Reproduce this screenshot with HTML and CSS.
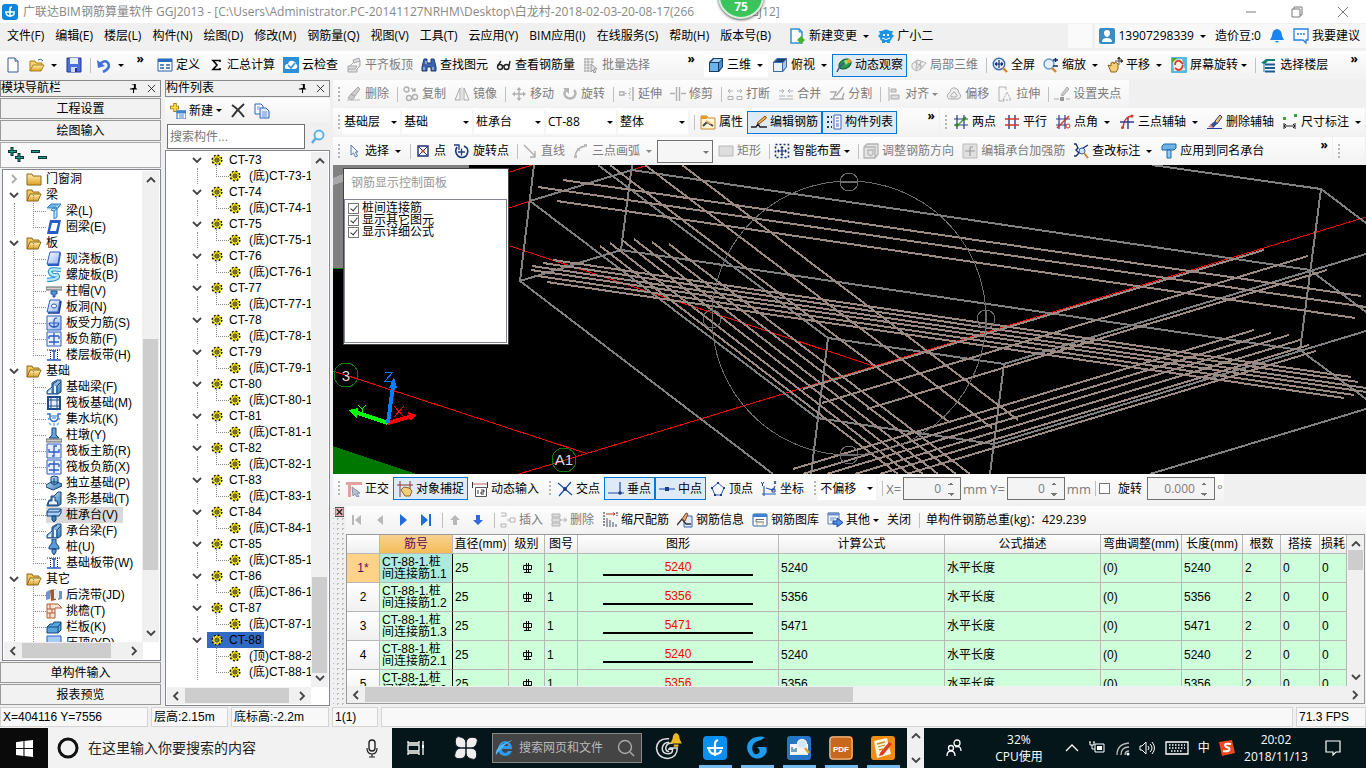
FILE: index.html
```html
<!doctype html>
<html lang="zh-CN">
<head>
  <meta charset="UTF-8">
  <meta name="viewport" content="width=device-width, initial-scale=1.0">
  <title>广联达BIM钢筋算量软件 GGJ2013</title>
  <link rel="stylesheet" href="styles.css">
</head>
<body>

<!-- icon sprite -->
<svg class="sprite" aria-hidden="true">
  <defs>
    <linearGradient id="g-fold" x1="0" y1="0" x2="0" y2="1"><stop offset="0" stop-color="#fff0b0"/><stop offset="1" stop-color="#e0a020"/></linearGradient>
    <linearGradient id="g-blue" x1="0" y1="0" x2="1" y2="1"><stop offset="0" stop-color="#fff"/><stop offset="1" stop-color="#8fb4ee"/></linearGradient>
    <linearGradient id="g-steel" x1="0" y1="0" x2="1" y2="1"><stop offset="0" stop-color="#d8ecfa"/><stop offset="1" stop-color="#2f78b8"/></linearGradient>
  </defs>
  <symbol id="logo" viewBox="0 0 16 16"><rect width="16" height="16" rx="3" fill="#0a86dc"/><path d="M8 13V5q0-2 2-2M3 8h10M4 8q0 4 4 4t4-3" fill="none" stroke="#fff" stroke-width="1.6"/></symbol>
  <symbol id="new" viewBox="0 0 16 16"><path d="M3 1h7l3 3v11H3z" fill="#fff" stroke="#3a5a8a"/><path d="M10 1v3h3" fill="#cfe0f5" stroke="#3a5a8a"/></symbol>
  <symbol id="open" viewBox="0 0 16 16"><path d="M1 14V4h5l1 2h6v2" fill="#f6d36b" stroke="#a9801e"/><path d="M1 14l3-6h11l-3 6z" fill="url(#g-fold)" stroke="#a9801e"/><path d="M9 3q3-2 5 1" fill="none" stroke="#2a62c0"/></symbol>
  <symbol id="save" viewBox="0 0 16 16"><path d="M1 1h14v14H1z" fill="#4f6fd8" stroke="#22349a"/><path d="M4 1h8v6H4z" fill="#e8eefc"/><path d="M5 10h6v5H5z" fill="#d0d8ec"/><path d="M9 11h2v4H9z" fill="#22349a"/></symbol>
  <symbol id="undo" viewBox="0 0 16 16"><path d="M7 15q8-4 5-9-3-4-8 1" fill="none" stroke="#3f72d8" stroke-width="2.6"/><path d="M1 3l1 8 7-2z" fill="#3f72d8"/></symbol>
  <symbol id="define" viewBox="0 0 16 16"><path d="M1 2h14v12H1z" fill="#fff" stroke="#2a5ea8"/><path d="M1 2h14v3H1z" fill="#2a6ac0"/><path d="M3 8h4M3 11h4M9 8h4M9 11h4" stroke="#2a5ea8" stroke-width="1.6"/></symbol>
  <symbol id="sum" viewBox="0 0 16 16"><path d="M12 5V3.500H5L9 8l-4 4.500h7V11" fill="none" stroke="#000" stroke-width="1.600"/></symbol>
  <symbol id="cloud" viewBox="0 0 16 16"><rect width="16" height="16" fill="#2a8fd6"/><path d="M4 12q-3 0-2-3 0-2 3-2 1-4 5-3 3 1 3 3 2 1 1 4l-2 1z" fill="#fff"/><path d="M5 8l3 3 4-5" fill="none" stroke="#2a8fd6" stroke-width="1.6"/></symbol>
  <symbol id="align-top" viewBox="0 0 16 16"><path d="M2 9h9l-2 3H2zM2 12v3h9v-3M4 9l4-4M11 12l3-3V4M7 3l6-2 1 3-6 2z" fill="#ddd" stroke="#a8a8a8"/></symbol>
  <symbol id="find" viewBox="0 0 16 16"><path d="M3 2h3v4h4V2h3l2 8v4h-5v-4H6v4H1v-4z" fill="#3c66ac" stroke="#1c3a78"/><path d="M3 10v3M12 10v3M5 4v3" stroke="#cfe0ff"/></symbol>
  <symbol id="glasses" viewBox="0 0 16 16"><g fill="none" stroke="#222" stroke-width="1.4"><circle cx="4" cy="10" r="2.5"/><circle cx="10.500" cy="10" r="2.500"/><path d="M1.500 9L5 4M13 9l1-5M6.500 9h1.500"/></g></symbol>
  <symbol id="batch" viewBox="0 0 16 16"><path d="M1 2h10M1 5h10M1 8h6M1 11h6M1 14h6M2 1v14M5 1v14M9 1v6" stroke="#aaa"/><path d="M8 7l6 5-3 0 2 3-2 1-1-3-2 2z" fill="#ddd" stroke="#999"/></symbol>
  <symbol id="cube" viewBox="0 0 16 16"><path d="M1 5l4-4h10v9l-4 5H1z" fill="#1d3b60"/><path d="M2 6h8v8H2z" fill="#6fb4e8"/><path d="M3 5l3-3h8l-3 3z" fill="#a9d6f8"/><path d="M11 6l3-3v7l-3 3z" fill="#4a90cc"/></symbol>
  <symbol id="topview" viewBox="0 0 16 16"><path d="M1 5l4-4h10v9l-4 5H1z" fill="#3a6ea8"/><path d="M2 6h8v8H2z" fill="#e6f0fa"/><path d="M3 5l3-3h8l-3 3z" fill="#14406f"/><path d="M11 6l3-3v7l-3 3z" fill="#a8c8e8"/></symbol>
  <symbol id="orbit" viewBox="0 0 16 16"><ellipse cx="9" cy="7" rx="6.500" ry="4.500" fill="#2c9c50" stroke="#0d5a2a" transform="rotate(-30 9 7)"/><path d="M8 4q4-3 5 1l-3 3z" fill="#9ce07a"/><path d="M1 15q3-7 7-9" fill="none" stroke="#3a5a8a" stroke-width="1.500"/><circle cx="13" cy="4" r="2" fill="#f0a030"/></symbol>
  <symbol id="local3d" viewBox="0 0 16 16"><path d="M1 7l5-4 4 1 5 2-5 6-5 2-4-3zM6 3l-1 9M10 4l-1 9M3 5l9 5M5 13l5-8" fill="#eee" stroke="#b4b4b4"/></symbol>
  <symbol id="full" viewBox="0 0 16 16"><circle cx="7" cy="7" r="5.800" fill="#e4f0fc" stroke="#3c6cb4" stroke-width="1.400"/><path d="M3 7h8M7 3v8M3 7l2-1.500M3 7l2 1.500M11 7L9 5.500M11 7L9 8.500" stroke="#14306c" stroke-width="1.200"/><path d="M11 11l4 4" stroke="#d0862a" stroke-width="2.400"/></symbol>
  <symbol id="zoom" viewBox="0 0 16 16"><circle cx="6" cy="7" r="5" fill="#e4f0fc" stroke="#6a94c8" stroke-width="1.400"/><path d="M9 11l4 4" stroke="#d0862a" stroke-width="2.400"/><path d="M10 3h5M12.500 1v4M10 9h5" stroke="#14306c" stroke-width="1.600"/></symbol>
  <symbol id="pan" viewBox="0 0 16 16"><path d="M1 8l3 1V6l2-1 1 2 1-2 2 1 1 1v5l-2 3H4z" fill="#f3cf7a" stroke="#8a6420"/><path d="M12 0v8M8 4h8M12 0l-1.500 2h3zM16 4l-2-1.500v3z" stroke="#333" fill="#333" stroke-width=".8"/></symbol>
  <symbol id="rotate-screen" viewBox="0 0 16 16"><rect width="16" height="16" rx="1" fill="#5cb8dc"/><path d="M2 3l9-1 3 11-11 1z" fill="#f4f4e8"/><path d="M4 8q0-5 5-4l3 3M12 8q-1 5-5 5l-3-2" fill="none" stroke="#e03a2a" stroke-width="1.800"/><path d="M1 1h5L1 6z" fill="#4aa82c"/></symbol>
  <symbol id="floors" viewBox="0 0 16 16"><path d="M0 6l5-4h9v2H7L4 7z" fill="#128072"/><path d="M4 7.500h10M4 11h10M4 14.500h10" stroke="#1a5a9a" stroke-width="2"/><path d="M3 6v9" stroke="#128072"/></symbol>
  <symbol id="erase-g" viewBox="0 0 16 16"><path d="M1 14h13" stroke="#bbb"/><path d="M5 8l7-7 2 2-5 7zM2 12l3-4 4 3-3 3z" fill="#ccc" stroke="#aaa"/></symbol>
  <symbol id="copy-g" viewBox="0 0 16 16"><g fill="none" stroke="#b0b0b0" stroke-width="1.400"><circle cx="3.500" cy="3.500" r="2.500"/><circle cx="6" cy="12" r="2.500"/><circle cx="12" cy="11" r="2.500"/><path d="M8 2l4 3M12 2v3H9"/></g></symbol>
  <symbol id="mirror-g" viewBox="0 0 16 16"><path d="M6 2v12H1zM10 2v12h5z" fill="none" stroke="#aaa"/><path d="M8 1v14" stroke="#ccc"/></symbol>
  <symbol id="move-g" viewBox="0 0 16 16"><path d="M8 3v10M3 8h10" stroke="#b0b0b0" stroke-width="1.400"/><path d="M8 1l2.500 3h-5zM8 15l2.500-3h-5zM1 8l3-2.500v5zM15 8l-3-2.500v5z" fill="#b0b0b0"/></symbol>
  <symbol id="rotate-g" viewBox="0 0 16 16"><path d="M4 4q-3 4 0 7 4 3 8 0 3-4 0-7" fill="none" stroke="#b4b4b4" stroke-width="2.400"/><path d="M1 2h6v6z" fill="#b4b4b4"/></symbol>
  <symbol id="extend-g" viewBox="0 0 16 16"><path d="M0 6h5v3H0zM14 1v14" stroke="#aaa" fill="none" stroke-width="1.400"/><path d="M6 7.500h5M11 2v12" stroke="#bbb" stroke-dasharray="2 1"/></symbol>
  <symbol id="trim-g" viewBox="0 0 16 16"><path d="M0 7.500h5M11 7.500h5M6.500 1v14M9.500 1v14" stroke="#b0b0b0" stroke-width="1.400"/></symbol>
  <symbol id="break-g" viewBox="0 0 16 16"><path d="M1 10.500h5v3H1zM10 10.500h5v3h-5z" stroke="#b0b0b0" fill="none"/><path d="M3 3L1 5l2 2M13 3l2 2-2 2M1 5h5M10 5h5" fill="none" stroke="#b0b0b0"/></symbol>
  <symbol id="join-g" viewBox="0 0 16 16"><path d="M1 13h14M1 10h6M9 10h6" stroke="#b0b0b0" fill="none"/><path d="M4 3l2 2-2 2M12 3l-2 2 2 2M1 5h5M10 5h5" fill="none" stroke="#b0b0b0"/></symbol>
  <symbol id="split-g" viewBox="0 0 16 16"><path d="M1 6h6l-3 7h9l2-6M1 13h14M14 1L7 10" fill="none" stroke="#aaa" stroke-width="1.400"/></symbol>
  <symbol id="align-g" viewBox="0 0 16 16"><path d="M3 1v14" stroke="#aaa"/><path d="M5 3h5v3H5zM5 9h8v4H5z" fill="#ddd" stroke="#aaa"/></symbol>
  <symbol id="offset-g" viewBox="0 0 16 16"><path d="M3 13q-4-3 1-7 1-5 5-4 4 1 4 5 4 4-1 6zM5 11q-1-2 1-3 2-4 4 0 2 2 0 3z" fill="#eee" stroke="#aaa"/></symbol>
  <symbol id="stretch-g" viewBox="0 0 16 16"><path d="M9 4V1H2v14h5" fill="none" stroke="#b0b0b0"/><path d="M6 14l4-8 4 8z" fill="none" stroke="#aaa" stroke-dasharray="2 1"/></symbol>
  <symbol id="grip-g" viewBox="0 0 16 16"><path d="M0 13h5M12 13h4" stroke="#aaa"/><path d="M6 11h4v4H6z" fill="#999"/><path d="M7 9l6-8 2 2-6 7z" fill="#ccc" stroke="#aaa"/></symbol>
  <symbol id="prop" viewBox="0 0 16 16"><path d="M1 2h6l1 2h7v11H1z" fill="#fff6da" stroke="#c88a2a"/><path d="M1 2h6v3H1z" fill="#e89a2a"/><path d="M3 12l4-4 3 2 3 2" fill="none" stroke="#444" stroke-width="2"/><path d="M6 7l5 3" stroke="#e8b060" stroke-width="1.500"/></symbol>
  <symbol id="edit-bar" viewBox="0 0 16 16"><path d="M0 13h5l2-3 2 3h7" fill="none" stroke="#222" stroke-width="1.400"/><path d="M6 9l8-7 1.500 2L8 10z" fill="#f0b848" stroke="#8a4a1a"/></symbol>
  <symbol id="list" viewBox="0 0 16 16"><path d="M8 1h7v14H8z" fill="#fff" stroke="#3a62b4"/><path d="M10 4h3M10 7h3M10 10h3M10 12h3" stroke="#3a62b4"/><path d="M1 3h2M1 8h2M1 13h2M5 3h1M5 8h1M5 13h1" stroke="#234" stroke-width="2"/></symbol>
  <symbol id="ax-two" viewBox="0 0 16 16"><path d="M4 1v14M11 1v14M1 5h14M1 11h14" stroke="#2c3c8c" stroke-width="1.200"/><path d="M3 13L13 3" stroke="#3f9a2c" stroke-width="1.200"/><circle cx="4" cy="11" r="1.700" fill="#2f8a22"/><circle cx="11" cy="5" r="1.700" fill="#2f8a22"/></symbol>
  <symbol id="ax-par" viewBox="0 0 16 16"><path d="M5 1v14M11 1v14" stroke="#2c3c8c" stroke-width="1.400"/><path d="M1 5h14M1 11h14" stroke="#d03a2a" stroke-width="1.400"/></symbol>
  <symbol id="ax-ang" viewBox="0 0 16 16"><path d="M4 1v14M10 1v14M1 5h14M1 11h10" stroke="#2c3c8c" stroke-width="1.200"/><path d="M2 14L14 2" stroke="#d03a2a" stroke-width="1.400"/><circle cx="13" cy="12" r="2" fill="none" stroke="#d03a2a"/></symbol>
  <symbol id="ax-arc" viewBox="0 0 16 16"><path d="M14 2Q5 2 4 14" fill="none" stroke="#d03a2a" stroke-width="1.400"/><path d="M1 8h14M9 4v11" stroke="#2c3c8c" stroke-width="1.400"/><circle cx="13" cy="2" r="1.500" fill="#d03a2a"/><circle cx="3.500" cy="13.500" r="1.500" fill="#d03a2a"/></symbol>
  <symbol id="ax-del" viewBox="0 0 16 16"><path d="M0 14.500h15" stroke="#2c3c8c"/><path d="M8 7l5-6 2 2-5 7z" fill="#f0c468" stroke="#2c3c8c"/><path d="M3 11l5-4 2 3-4 4z" fill="#2c4c9c"/><path d="M1 13l3-3 2 4z" fill="#d88"/></symbol>
  <symbol id="dim" viewBox="0 0 16 16"><path d="M1 3h3v3H1zM12 0h3v3h-3z" fill="#34a83c"/><path d="M2 9v6M13 9v6M2 12h11M2 12l2-2M2 12l2 2M13 12l-2-2M13 12l-2 2" stroke="#222" fill="none"/></symbol>
  <symbol id="pointer" viewBox="0 0 16 16"><path d="M5 2v10l2.500-2 2 4 2-1-2-4h2.500z" fill="#eef4fc" stroke="#5a7aac"/></symbol>
  <symbol id="point" viewBox="0 0 16 16"><path d="M3 3h10v10H3z" fill="#fff" stroke="#1c2c7c" stroke-width="1.400"/><path d="M4 4l8 8M12 4l-8 8" stroke="#1c2c7c"/><circle cx="8" cy="8" r="1.600" fill="#d03a2a"/></symbol>
  <symbol id="rot-point" viewBox="0 0 16 16"><path d="M3 4q-3 5 1 9 4 3 8 0 3-4 1-8l-3-2" fill="none" stroke="#1c3c7c" stroke-width="1.600"/><path d="M0 2h5v5M4 9h7M7.500 5.500v7" stroke="#1c3c7c" stroke-width="1.300" fill="none"/></symbol>
  <symbol id="line-g" viewBox="0 0 16 16"><path d="M2 2l11 11M13 8v6H8" fill="none" stroke="#aaa" stroke-width="1.300"/></symbol>
  <symbol id="arc-g" viewBox="0 0 16 16"><path d="M2 14Q3 4 13 3" fill="none" stroke="#aaa" stroke-width="1.400"/><path d="M1 12h3v3H1zM4 5h3v3H4zM11 1h3v3h-3z" fill="#bbb"/></symbol>
  <symbol id="rect-g" viewBox="0 0 16 16"><path d="M1 3h14v10H1z" fill="#ddd" stroke="#b8b8b8"/></symbol>
  <symbol id="smart" viewBox="0 0 16 16"><path d="M1.500 1.500h13v13h-13z" fill="none" stroke="#14306c" stroke-width="1.600" stroke-dasharray="2 2"/><path d="M8 4v8M4 8h8" stroke="#14306c" stroke-width="1.200"/><path d="M8 3l2 2H6zM8 13l2-2H6zM3 8l2-2v4zM13 8l-2-2v4z" fill="#14306c"/></symbol>
  <symbol id="adj-g" viewBox="0 0 16 16"><path d="M1 4l3-3h11v10l-3 4H1zM1 4h11v11M5 7h5v4q-2 3-5 0z" fill="#e4e4e4" stroke="#b4b4b4" stroke-width="1.300"/></symbol>
  <symbol id="str-g" viewBox="0 0 16 16"><path d="M1 1h14v14H1z" fill="#e0e0e0" stroke="#bbb"/><path d="M3 8h10M8 13V6q0-3 3-2" fill="none" stroke="#999" stroke-width="1.200"/></symbol>
  <symbol id="check-dim" viewBox="0 0 16 16"><path d="M1 1h2l2 4-2 2 3 3-3 3H1M7 7l8-5" fill="none" stroke="#14306c" stroke-width="1.400"/><circle cx="9" cy="8" r="3" fill="#cfe4fa" stroke="#2a62b0"/><path d="M11 10l4 5" stroke="#d0862a" stroke-width="2"/></symbol>
  <symbol id="cap" viewBox="0 0 16 16"><path d="M1 3l2-2h12v4l-2 2H1z" fill="#6cb4e8" stroke="#1f68a8"/><path d="M6 7h4v8H6z" fill="#8ccaf4" stroke="#1f68a8"/></symbol>
  <symbol id="ortho" viewBox="0 0 16 16"><path d="M0 1h16v3H5v12H2V4H0z" fill="#e0a4a0"/><path d="M6 6l8 6-3 .5 2 3-2 .5-2-3-2 2z" fill="#b6c6d6" stroke="#8494a8"/></symbol>
  <symbol id="snap" viewBox="0 0 16 16"><path d="M3 0v16M13 0v8M0 4h16" stroke="#903030"/><path d="M4 9l3-3 5 1 3 3-2 5H8z" fill="#f3cf7a" stroke="#8a6420"/></symbol>
  <symbol id="dyn" viewBox="0 0 16 16"><path d="M.5 1v6M15.500 1v6" stroke="#333"/><path d="M1 3h14" stroke="#c06060"/><path d="M3.500 6.500h11v9h-11z" fill="#fff" stroke="#555"/><path d="M6 9v4M9 9h3v2H9v2h3" fill="none" stroke="#333"/></symbol>
  <symbol id="cross" viewBox="0 0 16 16"><path d="M1 2l14 12M2 15L14 1" stroke="#1c4ca8" stroke-width="1.200"/><circle cx="8" cy="8" r="2" fill="#1c3c8c"/></symbol>
  <symbol id="perp" viewBox="0 0 16 16"><path d="M0 12h16M12 1v11" stroke="#1c4ca8" stroke-width="1.200"/><circle cx="12" cy="12" r="1.800" fill="#1c3c8c"/></symbol>
  <symbol id="mid" viewBox="0 0 16 16"><path d="M0 8h16" stroke="#3c6cc8" stroke-width="1.300"/><path d="M6 6h4v4H6z" fill="#1c3c8c"/></symbol>
  <symbol id="vertex" viewBox="0 0 16 16"><path d="M8 2l6 5-3 7H5L2 7z" fill="none" stroke="#2a5cb4"/><path d="M7 1h2v2H7zM1 6h2v2H1zM13 6h2v2h-2zM4 13h2v2H4zM10 13h2v2h-2z" fill="#1c3c8c"/></symbol>
  <symbol id="coord" viewBox="0 0 16 16"><path d="M3 5v10M1 13h14M5 7l7 2 2-4" fill="none" stroke="#2a5cb4" stroke-width="1.200"/><path d="M0 1l1.500 2L3 1M1.500 3v2M11 8h3v3h-3zM13 0l2 3M15 0l-2 3" stroke="#1c3c8c" fill="none"/></symbol>
  <symbol id="first-g" viewBox="0 0 16 16"><path d="M3 3h2v10H3zM12 3v10L6 8z" fill="#b8b8b8"/></symbol>
  <symbol id="prev-g" viewBox="0 0 16 16"><path d="M11 3v10L5 8z" fill="#b8b8b8"/></symbol>
  <symbol id="next" viewBox="0 0 16 16"><path d="M5 2v12l7-6z" fill="#1f6ae0"/></symbol>
  <symbol id="last" viewBox="0 0 16 16"><path d="M3 2v12l7-6zM11 2h2v12h-2z" fill="#1f6ae0"/></symbol>
  <symbol id="up-g" viewBox="0 0 16 16"><path d="M8 3l5 5h-3v5H6V8H3z" fill="#b8b8b8"/></symbol>
  <symbol id="down" viewBox="0 0 16 16"><path d="M8 13l5-5h-3V3H6v5H3z" fill="#2f6ae0"/></symbol>
  <symbol id="ins-g" viewBox="0 0 16 16"><path d="M1 1h5v3H1M1 12h5v3H1zM7 8h3M10 6h5v4h-5z" fill="none" stroke="#b4b4b4"/></symbol>
  <symbol id="delrow-g" viewBox="0 0 16 16"><path d="M1 2h8v3H1zM1 11h8v3H1zM1 6h8v4H1z" fill="#ddd" stroke="#b4b4b4"/><path d="M9 8h7M13 6l3 2-3 2" fill="none" stroke="#b4b4b4"/></symbol>
  <symbol id="scale-bar" viewBox="0 0 16 16"><path d="M4 2h9M11 .5l2 1.500-2 1.500" stroke="#c03a2a" fill="none"/><path d="M2 0v15M15 0v4" stroke="#222" stroke-dasharray="2 1"/><path d="M5 6v9M8 8v7M11 10v5M14 12v3" stroke="#456"/></symbol>
  <symbol id="bar-info" viewBox="0 0 16 16"><path d="M7 4h8v11H7z" fill="#dfeafa" stroke="#3a62b4"/><path d="M0 13l5-6 4 5h5" fill="none" stroke="#333" stroke-width="1.400"/><path d="M5 7l4-6 2 1-3 7z" fill="#e8a878" stroke="#8a4a1a"/></symbol>
  <symbol id="bar-lib" viewBox="0 0 16 16"><rect x="1" y="2" width="14" height="12" rx="1" fill="#fff" stroke="#2a5ea8"/><path d="M1 2h14v3H1z" fill="#3f80d0"/><path d="M4 10V7.500h8M4 10h8" fill="none" stroke="#666"/><path d="M4 12h2M10 12h2" stroke="#e0a020"/></symbol>
  <symbol id="other" viewBox="0 0 16 16"><path d="M1 1h11v11H1z" fill="#eef4fc" stroke="#5a7cb4"/><path d="M1 1h11v2H1zM3 6h6M3 8h4" fill="#7090c8" stroke="#7090c8"/><path d="M6 9h4V6l6 4.500L10 15v-3H6z" fill="#4f8cec" stroke="#17489c"/></symbol>
  <symbol id="change" viewBox="0 0 16 16"><path d="M1 1h8l3 3v11H1z" fill="#fff" stroke="#2f90d0" stroke-width="1.500"/><path d="M9 1v3h3" fill="none" stroke="#2f90d0"/><path d="M11 8l4 4-4 4-4-4z" fill="#48b42c"/></symbol>
  <symbol id="mascot" viewBox="0 0 16 16"><path d="M1 3l3 0q4-3 8 0l3 0-1 3 2 2-2 2q-1 3-2 3v2h-3v-1H7v1H4v-2q-2-1-2-3L0 8l2-2z" fill="#1b94e4"/><path d="M5 6h2v2H5zM9 6h2v2H9z" fill="#fff"/><path d="M4 10q4 3 8 0" stroke="#fff" fill="none"/></symbol>
  <symbol id="user" viewBox="0 0 16 16"><rect width="16" height="16" rx="2" fill="#3a8cc4"/><path d="M8 2q3 0 3 3t-3 4q-3-1-3-4t3-3M3 14q0-4 5-4t5 4z" fill="#fff"/></symbol>
  <symbol id="bell" viewBox="0 0 16 16"><path d="M8 1q5 1 5 7l2 4H1l2-4q0-6 5-7M6 13h4l-2 2z" fill="#1a84ee"/></symbol>
  <symbol id="chat" viewBox="0 0 16 16"><path d="M1 1h14v11h-2v3l-3-3H1z" fill="#fff" stroke="#2a80dc" stroke-width="1.300"/><path d="M4 6h2M7 6h2M10 6h2" stroke="#2a80dc" stroke-width="1.500"/></symbol>
  <symbol id="newcomp" viewBox="0 0 16 16"><path d="M5 0v9M0 4.500h9" stroke="#a87a10" stroke-width="3.400"/><path d="M5 1v7M1 4.500h7" stroke="#ffe04a" stroke-width="1.800"/><path d="M7 8h9v8H7z" fill="#fff" stroke="#2a5ea8"/><path d="M7 8h9v2H7zM9 12h5M9 14h5" fill="#3f80d0" stroke="#3f80d0"/></symbol>
  <symbol id="del-x" viewBox="0 0 16 16"><path d="M2 2q6 4 12 12M14 1Q7 7 2 14" fill="none" stroke="#333" stroke-width="2"/></symbol>
  <symbol id="copy" viewBox="0 0 16 16"><path d="M1 1h6l2 2v8H1z" fill="#fff" stroke="#2a5ec0"/><path d="M6 5h6l3 3v7H6z" fill="#dfeafc" stroke="#2a5ec0"/><path d="M8 9h5M8 11h5M8 13h5M3 4h3M3 6h2" stroke="#6a94dc"/></symbol>
  <symbol id="lens" viewBox="0 0 16 16"><circle cx="9" cy="6" r="4.500" fill="#eaf6ff" stroke="#5aaee4" stroke-width="1.800"/><path d="M6 9l-4 5" stroke="#5aaee4" stroke-width="2.600"/></symbol>
  <symbol id="pin" viewBox="0 0 10 10"><path d="M3 0h4v5H3M6 0v5M1 5.500h8M5 5v5" fill="none" stroke="#000" stroke-width="1.200"/></symbol>
  <symbol id="x" viewBox="0 0 10 10"><path d="M1 1l8 8M9 1L1 9" stroke="#222"/></symbol>
  <symbol id="expand" viewBox="0 0 16 16"><path d="M4 0v9M0 4.500h9M11 6v9M7 10.500h9" stroke="#063838" stroke-width="3"/><path d="M4 1v7M1 4.500h7M11 7v7M8 10.500h7" stroke="#2a9a88"/></symbol>
  <symbol id="collapse" viewBox="0 0 16 16"><path d="M0 4.500h9M7 10.500h9" stroke="#063838" stroke-width="3"/><path d="M1 4.500h7M8 10.500h7" stroke="#2a9a88"/></symbol>
  <symbol id="chev" viewBox="0 0 10 10"><path d="M1 3l4 4 4-4" fill="none" stroke="#444" stroke-width="1.800"/></symbol>
  <symbol id="chev-r" viewBox="0 0 10 10"><path d="M3 1l4 4-4 4" fill="none" stroke="#aaa" stroke-width="1.800"/></symbol>
  <symbol id="folder" viewBox="0 0 16 16"><path d="M1 3h5l1 2h8v9H1z" fill="url(#g-fold)" stroke="#8a681e"/></symbol>
  <symbol id="folder-open" viewBox="0 0 16 16"><path d="M1 14V3h5l1 2h6v2" fill="#f3c65a" stroke="#8a681e"/><path d="M1 14l3-7h11l-3 7z" fill="url(#g-fold)" stroke="#8a681e"/></symbol>
  <symbol id="gear" viewBox="0 0 12 12"><circle cx="6" cy="6" r="4.800" fill="#fff000" stroke="#000" stroke-width="1.400" stroke-dasharray="1.900 1.860"/><circle cx="6" cy="6" r="3.300" fill="#fff000"/><path d="M6 2.500v7M2.500 6h7M3.500 3.500l5 5M8.500 3.500l-5 5" stroke="#333" stroke-width=".8"/><circle cx="6" cy="6" r="1.200" fill="#fff" stroke="#000" stroke-width=".8"/></symbol>
  <!-- component icons -->
  <symbol id="c-beam" viewBox="0 0 16 16"><path d="M1 5l4-4h10l-3 4zM5 7l2-2h4v9l-3 2V8z" fill="#bfe2fa" stroke="#2a80c8"/><path d="M12 4l3-3M8 8l4-3M2 4l8 0M4 2l8 0" stroke="#2a80c8"/></symbol>
  <symbol id="c-ring" viewBox="0 0 16 16"><path d="M4 1h11l-3 14H1z" fill="#2a5ac4"/><path d="M6 4h6l-2 8H4z" fill="#fff"/></symbol>
  <symbol id="c-slab" viewBox="0 0 16 16"><path d="M4 1h10l-2 12H1z" fill="url(#g-blue)" stroke="#2a5ac4"/><path d="M14 1l1 1-2 13H2l-1-2h11z" fill="#2a5ac4"/></symbol>
  <symbol id="c-spiral" viewBox="0 0 16 16"><path d="M15 3Q3 1 4 5t7 3q4 4-10 5" fill="none" stroke="#2a90d0" stroke-width="4.400"/><path d="M15 3Q3 1 4 5t7 3q4 4-10 5" fill="none" stroke="#b8e8ff" stroke-width="2.400"/></symbol>
  <symbol id="c-cap" viewBox="0 0 16 16"><path d="M0 4h16v3H0z" fill="#d0d0d0" stroke="#666"/><path d="M5 8h6v3H9v3H7v-3H5z" fill="#5a9ae0" stroke="#1c4ca8"/></symbol>
  <symbol id="c-hole" viewBox="0 0 16 16"><path d="M4 1h10l-2 12H1z" fill="url(#g-blue)" stroke="#2a5ac4"/><ellipse cx="8" cy="7" rx="2.500" ry="2" fill="#fff" stroke="#2a5ac4"/><path d="M2 14h11l2-12" fill="none" stroke="#1c3c94" stroke-width="1.600"/></symbol>
  <symbol id="c-rebar" viewBox="0 0 16 16"><path d="M1 1h14v14H1z" fill="url(#g-blue)" stroke="#2a5ac4"/><path d="M8 13V6q0-3 3-3M3 8h10M3 8q1 4 5 4t5-4" fill="none" stroke="#2a5ac4" stroke-width="1.200"/></symbol>
  <symbol id="c-neg" viewBox="0 0 16 16"><path d="M1 1h14v14H1z" fill="#e8f0ff" stroke="#2a5ac4"/><path d="M3 5h10M3 11h10M8 2v12M3 5v3M13 5v3" fill="none" stroke="#2a5ac4" stroke-width="1.300"/></symbol>
  <symbol id="c-band" viewBox="0 0 16 16"><path d="M1 3h14M4.500 3v9M11.500 3v9" stroke="#222" stroke-dasharray="1 1"/><path d="M8 4v9M6 4h4M1 13h14" stroke="#2a5ac4" stroke-width="1.600"/></symbol>
  <symbol id="c-found" viewBox="0 0 16 16"><path d="M1 15v-3l5-4V4l5-3h4v12l-3 2z" fill="url(#g-steel)" stroke="#12447c"/><path d="M7 15V5l4-3M11 15V7l4-4" fill="none" stroke="#12447c"/><path d="M8 7h2v7H8zM2 13l3-3v4H2z" fill="#eaf6ff"/></symbol>
  <symbol id="c-raft" viewBox="0 0 16 16"><path d="M2 2h12v12H2z" fill="#e8f0ff" stroke="#1c4c8c" stroke-width="2"/><path d="M5 1v14M11 1v14M1 5h14M1 11h14" stroke="#1c4c8c"/></symbol>
  <symbol id="c-pit" viewBox="0 0 16 16"><path d="M1 3h3v5q4 5 8 0V3h3" fill="none" stroke="#2a70c8" stroke-width="1.500"/><path d="M5 5h6M6 7h4M2 7l1 2M3 12l2 2M8 12v3M13 12l-2 2M14 7l-1 2" stroke="#6aa4e4" stroke-width="1.300"/></symbol>
  <symbol id="c-pier" viewBox="0 0 16 16"><path d="M6 1h4v7l3 3H3l3-3z" fill="#6aa4e4" stroke="#12447c"/><path d="M0 12h16v3H0z" fill="#ccc" stroke="#666"/></symbol>
  <symbol id="c-main" viewBox="0 0 16 16"><path d="M1 1h14v14H1z" fill="#e8f0ff" stroke="#2a5ac4"/><path d="M3 6v3h10V6M6 13h2V3h3" fill="none" stroke="#2a5ac4" stroke-width="1.300"/></symbol>
  <symbol id="c-indep" viewBox="0 0 16 16"><path d="M0 10l5-3h6l5 2v2l-9 4-7-3zM5 8V2l3-1 4 1v6L8 10z" fill="url(#g-steel)" stroke="#12447c"/><path d="M8 3v6" stroke="#12447c"/></symbol>
  <symbol id="c-strip" viewBox="0 0 16 16"><path d="M1 14l2-5h2V5h3l4-4h3v12l-3 2H1z" fill="url(#g-steel)" stroke="#12447c"/><path d="M2 14l1-4h3V6h3v4h2l1 4z" fill="#eaf6ff" stroke="#12447c"/></symbol>
  <symbol id="c-pilecap" viewBox="0 0 16 16"><path d="M1 5l2-3h12v4l-2 3H1z" fill="#a8d0f4" stroke="#12447c"/><path d="M1 5h12l2-3" fill="none" stroke="#12447c"/><path d="M6 9h4v4l-2 2-2-2z" fill="#3a80c0" stroke="#12447c"/></symbol>
  <symbol id="c-pile" viewBox="0 0 16 16"><path d="M6 0h4v4l3 4v2H3V8l3-4zM6 10h4v3l-2 3-2-3z" fill="#5a9ad8" stroke="#12447c"/></symbol>
  <symbol id="c-post" viewBox="0 0 16 16"><path d="M0 5l4-2v9l-4 1zM12 4h4v8l-4 1z" fill="#7094c8"/><path d="M4 3l6-1v11l-5 1z" fill="#9a5a34"/><path d="M8 2l5 1v8l-5 1z" fill="#e8eef4"/></symbol>
  <symbol id="c-eave" viewBox="0 0 16 16"><path d="M1 1h11l4 4H9v10H1z" fill="#fbe4d4" stroke="#b05a34"/><path d="M1 6h8M1 10h8M4 1v5M6 6v4M4 10v5" stroke="#b05a34"/></symbol>
  <symbol id="c-rail" viewBox="0 0 16 16"><path d="M1 8l3-3h3l1-2h7v8l-3 3H1z" fill="#5aa4dc" stroke="#12447c"/><path d="M1 8h11l3-4M12 8v6" fill="none" stroke="#12447c"/></symbol>
  <symbol id="c-top" viewBox="0 0 16 16"><path d="M1 1h14v7H1z" fill="#a8ccf4" stroke="#2a5ac4"/></symbol>
  <symbol id="hrb" viewBox="0 0 12 12"><path d="M2.500 3.500h8v4h-8zM5.500 1v9M7.500 1v9M3 10.500h7" fill="none" stroke="#000"/></symbol>
</svg>

<header class="titlebar">
  <svg class="ico"><use href="#logo"/></svg>
  <h1>广联达BIM钢筋算量软件 GGJ2013 - [C:\Users\Administrator.PC-20141127NRHM\Desktop\白龙村-2018-02-03-20-08-17(266<span>GJ12]</span></h1>
  <div class="win-btns">
    <button aria-label="最小化"><svg viewBox="0 0 12 12"><path d="M1 6h10" stroke="#777"/></svg></button>
    <button aria-label="还原"><svg viewBox="0 0 12 12"><path d="M1 3h8v8H1zM3 3V1h8v8H9" fill="none" stroke="#777"/></svg></button>
    <button aria-label="关闭"><svg viewBox="0 0 12 12"><path d="M1 1l10 10M11 1L1 11" stroke="#777"/></svg></button>
  </div>
  <div class="ball">75</div>
</header>

<nav class="menubar">
  <button>文件(F)</button><button>编辑(E)</button><button>楼层(L)</button><button>构件(N)</button><button>绘图(D)</button><button>修改(M)</button><button>钢筋量(Q)</button><button>视图(V)</button><button>工具(T)</button><button>云应用(Y)</button><button>BIM应用(I)</button><button>在线服务(S)</button><button>帮助(H)</button><button>版本号(B)</button>
  <button class="tb lead"><svg class="ico"><use href="#change"/></svg>新建变更<i class="caret wide"></i></button>
  <button class="tb"><svg class="ico"><use href="#mascot"/></svg>广小二</button>
  <span class="menu-gap"></span>
  <div class="account">
    <button class="tb"><svg class="ico"><use href="#user"/></svg>13907298339<i class="caret wide"></i></button>
    <button>造价豆:0</button>
    <button class="tb"><svg class="ico"><use href="#bell"/></svg></button>
    <button class="tb"><svg class="ico"><use href="#chat"/></svg>我要建议</button>
  </div>
</nav>

<div class="bar-row row-main">
  <div class="toolbar">
    <button class="tb"><svg class="ico"><use href="#new"/></svg></button>
    <button class="tb"><svg class="ico"><use href="#open"/></svg><i class="caret wide"></i></button>
    <button class="tb"><svg class="ico"><use href="#save"/></svg></button>
    <span class="sep"></span>
    <button class="tb"><svg class="ico"><use href="#undo"/></svg><i class="caret wide"></i></button>
    <span class="more">»</span>
  </div>
  <div class="toolbar">
    <button class="tb"><svg class="ico"><use href="#define"/></svg>定义</button>
    <button class="tb"><svg class="ico"><use href="#sum"/></svg>汇总计算</button>
    <button class="tb"><svg class="ico"><use href="#cloud"/></svg>云检查</button>
    <button class="tb off"><svg class="ico"><use href="#align-top"/></svg>平齐板顶</button>
    <button class="tb"><svg class="ico"><use href="#find"/></svg>查找图元</button>
    <button class="tb"><svg class="ico"><use href="#glasses"/></svg>查看钢筋量</button>
    <button class="tb off"><svg class="ico"><use href="#batch"/></svg>批量选择</button>
    <span class="more">»</span>
  </div>
  <div class="toolbar">
    <button class="tb flat"><svg class="ico"><use href="#cube"/></svg>三维<i class="caret wide"></i></button>
    <button class="tb"><svg class="ico"><use href="#topview"/></svg>俯视<i class="caret wide"></i></button>
    <button class="tb on"><svg class="ico"><use href="#orbit"/></svg>动态观察</button>
    <button class="tb off"><svg class="ico"><use href="#local3d"/></svg>局部三维</button>
    <span class="sep"></span>
    <button class="tb"><svg class="ico"><use href="#full"/></svg>全屏</button>
    <button class="tb"><svg class="ico"><use href="#zoom"/></svg>缩放<i class="caret wide"></i></button>
    <button class="tb"><svg class="ico"><use href="#pan"/></svg>平移<i class="caret wide"></i></button>
    <button class="tb"><svg class="ico"><use href="#rotate-screen"/></svg>屏幕旋转<i class="caret"></i></button>
    <span class="sep"></span>
    <button class="tb"><svg class="ico"><use href="#floors"/></svg>选择楼层</button>
    <span class="more">»</span>
  </div>
</div>

<main class="work">
  <!-- module navigation -->
  <aside class="dock">
    <div class="dock-title"><h2>模块导航栏</h2><svg><use href="#pin"/></svg><svg><use href="#x"/></svg></div>
    <button class="nav-btn">工程设置</button>
    <button class="nav-btn">绘图输入</button>
    <div class="strip"><svg class="ico"><use href="#expand"/></svg><svg class="ico"><use href="#collapse"/></svg></div>
    <div class="tree-box">
      <div class="tree-body">
        <ul class="tree nav-tree">
          <li><div class="node"><svg class="chev"><use href="#chev-r"/></svg><svg class="ico"><use href="#folder"/></svg>门窗洞</div></li>
          <li><div class="node"><svg class="chev"><use href="#chev"/></svg><svg class="ico"><use href="#folder-open"/></svg>梁</div>
            <ul>
              <li><svg class="ico"><use href="#c-beam"/></svg><span>梁(L)</span></li>
              <li><svg class="ico"><use href="#c-ring"/></svg><span>圈梁(E)</span></li>
            </ul>
          </li>
          <li><div class="node"><svg class="chev"><use href="#chev"/></svg><svg class="ico"><use href="#folder-open"/></svg>板</div>
            <ul>
              <li><svg class="ico"><use href="#c-slab"/></svg><span>现浇板(B)</span></li>
              <li><svg class="ico"><use href="#c-spiral"/></svg><span>螺旋板(B)</span></li>
              <li><svg class="ico"><use href="#c-cap"/></svg><span>柱帽(V)</span></li>
              <li><svg class="ico"><use href="#c-hole"/></svg><span>板洞(N)</span></li>
              <li><svg class="ico"><use href="#c-rebar"/></svg><span>板受力筋(S)</span></li>
              <li><svg class="ico"><use href="#c-neg"/></svg><span>板负筋(F)</span></li>
              <li><svg class="ico"><use href="#c-band"/></svg><span>楼层板带(H)</span></li>
            </ul>
          </li>
          <li><div class="node"><svg class="chev"><use href="#chev"/></svg><svg class="ico"><use href="#folder-open"/></svg>基础</div>
            <ul>
              <li><svg class="ico"><use href="#c-found"/></svg><span>基础梁(F)</span></li>
              <li><svg class="ico"><use href="#c-raft"/></svg><span>筏板基础(M)</span></li>
              <li><svg class="ico"><use href="#c-pit"/></svg><span>集水坑(K)</span></li>
              <li><svg class="ico"><use href="#c-pier"/></svg><span>柱墩(Y)</span></li>
              <li><svg class="ico"><use href="#c-main"/></svg><span>筏板主筋(R)</span></li>
              <li><svg class="ico"><use href="#c-neg"/></svg><span>筏板负筋(X)</span></li>
              <li><svg class="ico"><use href="#c-indep"/></svg><span>独立基础(P)</span></li>
              <li><svg class="ico"><use href="#c-strip"/></svg><span>条形基础(T)</span></li>
              <li class="current"><svg class="ico"><use href="#c-pilecap"/></svg><span>桩承台(V)</span></li>
              <li><svg class="ico"><use href="#c-found"/></svg><span>承台梁(F)</span></li>
              <li><svg class="ico"><use href="#c-pile"/></svg><span>桩(U)</span></li>
              <li><svg class="ico"><use href="#c-band"/></svg><span>基础板带(W)</span></li>
            </ul>
          </li>
          <li><div class="node"><svg class="chev"><use href="#chev"/></svg><svg class="ico"><use href="#folder-open"/></svg>其它</div>
            <ul>
              <li><svg class="ico"><use href="#c-post"/></svg><span>后浇带(JD)</span></li>
              <li><svg class="ico"><use href="#c-eave"/></svg><span>挑檐(T)</span></li>
              <li><svg class="ico"><use href="#c-rail"/></svg><span>栏板(K)</span></li>
              <li><svg class="ico"><use href="#c-top"/></svg><span>压顶(YD)</span></li>
            </ul>
          </li>
        </ul>
        <div class="vscroll nav-v"><svg class="up"><use href="#chev"/></svg><i></i><svg><use href="#chev"/></svg></div>
      </div>
      <div class="hscroll nav-h"><svg class="left"><use href="#chev"/></svg><i></i><svg class="right"><use href="#chev"/></svg></div>
    </div>
    <button class="nav-btn">单构件输入</button>
    <button class="nav-btn">报表预览</button>
  </aside>

  <!-- component list -->
  <aside class="dock list-dock">
    <div class="dock-title"><h2>构件列表</h2><svg><use href="#pin"/></svg><svg><use href="#x"/></svg></div>
    <div class="toolbar list-bar">
      <button class="tb"><svg class="ico"><use href="#newcomp"/></svg>新建<i class="caret"></i></button>
      <button class="tb"><svg class="ico"><use href="#del-x"/></svg></button>
      <button class="tb"><svg class="ico"><use href="#copy"/></svg></button>
    </div>
    <form class="search">
      <input type="text" placeholder="搜索构件..." aria-label="搜索构件">
      <button type="button" aria-label="搜索"><svg class="ico"><use href="#lens"/></svg></button>
    </form>
    <div class="tree-box">
      <div class="tree-body">
        <ul class="tree comp-tree">
          <li><div class="node"><svg class="chev"><use href="#chev"/></svg><svg class="gear"><use href="#gear"/></svg><span>CT-73</span></div><ul><li><svg class="gear"><use href="#gear"/></svg><span>(底)CT-73-1</span></li></ul></li>
          <li><div class="node"><svg class="chev"><use href="#chev"/></svg><svg class="gear"><use href="#gear"/></svg><span>CT-74</span></div><ul><li><svg class="gear"><use href="#gear"/></svg><span>(底)CT-74-1</span></li></ul></li>
          <li><div class="node"><svg class="chev"><use href="#chev"/></svg><svg class="gear"><use href="#gear"/></svg><span>CT-75</span></div><ul><li><svg class="gear"><use href="#gear"/></svg><span>(底)CT-75-1</span></li></ul></li>
          <li><div class="node"><svg class="chev"><use href="#chev"/></svg><svg class="gear"><use href="#gear"/></svg><span>CT-76</span></div><ul><li><svg class="gear"><use href="#gear"/></svg><span>(底)CT-76-1</span></li></ul></li>
          <li><div class="node"><svg class="chev"><use href="#chev"/></svg><svg class="gear"><use href="#gear"/></svg><span>CT-77</span></div><ul><li><svg class="gear"><use href="#gear"/></svg><span>(底)CT-77-1</span></li></ul></li>
          <li><div class="node"><svg class="chev"><use href="#chev"/></svg><svg class="gear"><use href="#gear"/></svg><span>CT-78</span></div><ul><li><svg class="gear"><use href="#gear"/></svg><span>(底)CT-78-1</span></li></ul></li>
          <li><div class="node"><svg class="chev"><use href="#chev"/></svg><svg class="gear"><use href="#gear"/></svg><span>CT-79</span></div><ul><li><svg class="gear"><use href="#gear"/></svg><span>(底)CT-79-1</span></li></ul></li>
          <li><div class="node"><svg class="chev"><use href="#chev"/></svg><svg class="gear"><use href="#gear"/></svg><span>CT-80</span></div><ul><li><svg class="gear"><use href="#gear"/></svg><span>(底)CT-80-1</span></li></ul></li>
          <li><div class="node"><svg class="chev"><use href="#chev"/></svg><svg class="gear"><use href="#gear"/></svg><span>CT-81</span></div><ul><li><svg class="gear"><use href="#gear"/></svg><span>(底)CT-81-1</span></li></ul></li>
          <li><div class="node"><svg class="chev"><use href="#chev"/></svg><svg class="gear"><use href="#gear"/></svg><span>CT-82</span></div><ul><li><svg class="gear"><use href="#gear"/></svg><span>(底)CT-82-1</span></li></ul></li>
          <li><div class="node"><svg class="chev"><use href="#chev"/></svg><svg class="gear"><use href="#gear"/></svg><span>CT-83</span></div><ul><li><svg class="gear"><use href="#gear"/></svg><span>(底)CT-83-1</span></li></ul></li>
          <li><div class="node"><svg class="chev"><use href="#chev"/></svg><svg class="gear"><use href="#gear"/></svg><span>CT-84</span></div><ul><li><svg class="gear"><use href="#gear"/></svg><span>(底)CT-84-1</span></li></ul></li>
          <li><div class="node"><svg class="chev"><use href="#chev"/></svg><svg class="gear"><use href="#gear"/></svg><span>CT-85</span></div><ul><li><svg class="gear"><use href="#gear"/></svg><span>(底)CT-85-1</span></li></ul></li>
          <li><div class="node"><svg class="chev"><use href="#chev"/></svg><svg class="gear"><use href="#gear"/></svg><span>CT-86</span></div><ul><li><svg class="gear"><use href="#gear"/></svg><span>(底)CT-86-1</span></li></ul></li>
          <li><div class="node"><svg class="chev"><use href="#chev"/></svg><svg class="gear"><use href="#gear"/></svg><span>CT-87</span></div><ul><li><svg class="gear"><use href="#gear"/></svg><span>(底)CT-87-1</span></li></ul></li>
          <li class="picked"><div class="node"><svg class="chev"><use href="#chev"/></svg><b><svg class="gear"><use href="#gear"/></svg><span>CT-88</span></b></div><ul><li><svg class="gear"><use href="#gear"/></svg><span>(顶)CT-88-2</span></li><li><svg class="gear"><use href="#gear"/></svg><span>(底)CT-88-1</span></li></ul></li>
        </ul>
        <div class="vscroll comp-v"><svg class="up"><use href="#chev"/></svg><i></i><svg><use href="#chev"/></svg></div>
      </div>
      <div class="hscroll comp-h"><svg class="left"><use href="#chev"/></svg><i></i><svg class="right"><use href="#chev"/></svg></div>
    </div>
  </aside>

  <section class="stage">
    <div class="bar-row">
      <div class="toolbar off fit">
        <span class="grip"></span>
        <button class="tb"><svg class="ico"><use href="#erase-g"/></svg>删除</button>
        <span class="sep"></span>
        <button class="tb"><svg class="ico"><use href="#copy-g"/></svg>复制</button>
        <button class="tb"><svg class="ico"><use href="#mirror-g"/></svg>镜像</button>
        <span class="sep"></span>
        <button class="tb"><svg class="ico"><use href="#move-g"/></svg>移动</button>
        <button class="tb"><svg class="ico"><use href="#rotate-g"/></svg>旋转</button>
        <span class="sep"></span>
        <button class="tb"><svg class="ico"><use href="#extend-g"/></svg>延伸</button>
        <button class="tb"><svg class="ico"><use href="#trim-g"/></svg>修剪</button>
        <span class="sep"></span>
        <button class="tb"><svg class="ico"><use href="#break-g"/></svg>打断</button>
        <button class="tb"><svg class="ico"><use href="#join-g"/></svg>合并</button>
        <button class="tb"><svg class="ico"><use href="#split-g"/></svg>分割</button>
        <span class="sep"></span>
        <button class="tb"><svg class="ico"><use href="#align-g"/></svg>对齐<i class="caret"></i></button>
        <button class="tb"><svg class="ico"><use href="#offset-g"/></svg>偏移</button>
        <button class="tb"><svg class="ico"><use href="#stretch-g"/></svg>拉伸</button>
        <span class="sep"></span>
        <button class="tb"><svg class="ico"><use href="#grip-g"/></svg>设置夹点</button>
      </div>
    </div>

    <div class="bar-row row-combo">
      <div class="toolbar">
        <span class="grip"></span>
        <label class="pick short"><select aria-label="楼层"><option>基础层</option></select></label>
        <label class="pick"><select aria-label="构件类型"><option>基础</option></select></label>
        <label class="pick"><select aria-label="构件"><option>桩承台</option></select></label>
        <label class="pick"><select aria-label="名称"><option>CT-88</option></select></label>
        <label class="pick"><select aria-label="单元"><option>整体</option></select></label>
        <span class="sep"></span>
        <button class="tb"><svg class="ico"><use href="#prop"/></svg>属性</button>
        <button class="tb on"><svg class="ico"><use href="#edit-bar"/></svg>编辑钢筋</button>
        <button class="tb on"><svg class="ico"><use href="#list"/></svg>构件列表</button>
        <span class="more">»</span>
      </div>
      <div class="toolbar">
        <span class="grip"></span>
        <button class="tb"><svg class="ico"><use href="#ax-two"/></svg>两点</button>
        <button class="tb"><svg class="ico"><use href="#ax-par"/></svg>平行</button>
        <button class="tb"><svg class="ico"><use href="#ax-ang"/></svg>点角<i class="caret wide"></i></button>
        <button class="tb"><svg class="ico"><use href="#ax-arc"/></svg>三点辅轴<i class="caret wide"></i></button>
        <button class="tb"><svg class="ico"><use href="#ax-del"/></svg>删除辅轴</button>
        <button class="tb"><svg class="ico"><use href="#dim"/></svg>尺寸标注<i class="caret wide"></i></button>
      </div>
    </div>

    <div class="bar-row row-draw">
      <div class="toolbar">
        <span class="grip"></span>
        <button class="tb"><svg class="ico"><use href="#pointer"/></svg>选择<i class="caret wide"></i></button>
        <span class="sep"></span>
        <button class="tb"><svg class="ico"><use href="#point"/></svg>点</button>
        <button class="tb"><svg class="ico"><use href="#rot-point"/></svg>旋转点</button>
        <span class="sep"></span>
        <button class="tb off"><svg class="ico"><use href="#line-g"/></svg>直线</button>
        <button class="tb off"><svg class="ico"><use href="#arc-g"/></svg>三点画弧<i class="caret wide"></i></button>
        <label class="pick boxed"><select aria-label="半径"><option></option></select></label>
        <button class="tb off"><svg class="ico"><use href="#rect-g"/></svg>矩形</button>
        <span class="sep"></span>
        <button class="tb"><svg class="ico"><use href="#smart"/></svg>智能布置<i class="caret"></i></button>
        <span class="sep"></span>
        <button class="tb off"><svg class="ico"><use href="#adj-g"/></svg>调整钢筋方向</button>
        <button class="tb off"><svg class="ico"><use href="#str-g"/></svg>编辑承台加强筋</button>
        <button class="tb"><svg class="ico"><use href="#check-dim"/></svg>查改标注<i class="caret wide"></i></button>
        <button class="tb"><svg class="ico"><use href="#cap"/></svg>应用到同名承台</button>
        <span class="more">»</span>
      </div>
      <div class="toolbar"><span class="grip"></span></div>
    </div>

    <div class="viewport">
      <svg class="scene" viewBox="333 165 1033 309" preserveAspectRatio="xMinYMin slice" shape-rendering="crispEdges">
        <path d="M333 165h136v3H343v100h-10z" fill="#808080"/>
        <path d="M333 178l10-4v8l-10 3z" fill="#a8a8a8"/>
        <path d="M333 446l83 28h-83z" fill="#007800"/>
        <g fill="none" stroke="#f00">
          <path d="M510 172L532 165M509 208L530 201M632 170L648 165M510 246L873 366M333 371L585 453M519 474L1366 217"/>
        </g>
        <g fill="none" stroke="#808080" stroke-width="2">
          <path d="M534 165L520 281L621 250L632 165M530 201L632 170L1310 270M621 250L1300 350M530 201L817 418M520 281L773 474M598 165L828 338L1004 364L990 474M828 338L811 474M817 418L993 444M1004 364L1366 254M993 444L1366 331M1152 165L1321 189L1300 350L1366 399M1321 189L1366 223M1310 270L1366 312M1150 474L1366 409"/>
        </g>
        <g fill="none" stroke="#9c8b84" stroke-width="2">
          <path d="M563 180L1361 296M538 187L1366 307M557 201L1355 318"/>
          <path d="M553 260L1351 377M543 263L1358 382M532 266L1366 388M531 270L1366 392M538 276L1354 395M547 282L1344 398"/>
          <path d="M600 246L898 474M610 243L909 474M622 240L923 474M634 239L938 474M652 242L956 474M669 244L970 474"/>
          <path d="M610 165L949 422M645 165L992 428M682 165L1018 420"/>
          <path d="M803 389L1264 250M822 403L1308 256M867 409L1327 270"/>
          <path d="M793 469L1254 330M803 474L1271 333M827 474L1289 335M855 474L1300 340M880 474L1309 345M907 474L1316 351"/>
        </g>
        <g fill="none" stroke="#6c6c6c">
          <circle cx="849" cy="318" r="137"/>
          <circle cx="849" cy="182" r="9"/><circle cx="986" cy="319" r="9"/><circle cx="849" cy="455" r="9"/><circle cx="712" cy="319" r="9"/>
          <path d="M840 182h18M986 310v18M840 455h18M712 310v18"/>
        </g>
        <g fill="none" stroke="#0a7a0a"><circle cx="346" cy="375" r="12"/><circle cx="564" cy="460" r="12"/><path d="M333 268h12"/></g>
        <path d="M388 423L412 416" stroke="#f00" stroke-width="4"/><path d="M408 412l8 3-5 6z" fill="#f00"/><path d="M394 406l10 11M404 406l-10 11" stroke="#f00"/>
        <path d="M388 423L355 412" stroke="#0f0" stroke-width="4"/><path d="M348 410l10-2-1 10z" fill="#0f0"/><path d="M358 405l4 4 4-4M362 409v5" fill="none" stroke="#0f0"/>
        <path d="M388 423L393 386" stroke="#0080ff" stroke-width="4"/><path d="M394 377l-5 11h8z" fill="#0080ff"/><path d="M385 372h8l-8 9h8" fill="none" stroke="#0080ff"/>
        <text x="346" y="381" class="axis-no">3</text>
        <text x="564" y="465" class="axis-no">A1</text>
      </svg>
      <div class="float-panel">
        <h3>钢筋显示控制面板</h3>
        <div class="checks">
          <label><input type="checkbox" checked>桩间连接筋</label>
          <label><input type="checkbox" checked>显示其它图元</label>
          <label><input type="checkbox" checked>显示详细公式</label>
        </div>
      </div>
    </div>

    <div class="bar-row row-snap">
      <div class="toolbar">
        <span class="grip"></span>
        <button class="tb"><svg class="ico"><use href="#ortho"/></svg>正交</button>
        <button class="tb on"><svg class="ico"><use href="#snap"/></svg>对象捕捉</button>
        <button class="tb"><svg class="ico"><use href="#dyn"/></svg>动态输入</button>
      </div>
      <div class="toolbar">
        <span class="grip"></span>
        <button class="tb"><svg class="ico"><use href="#cross"/></svg>交点</button>
        <button class="tb on"><svg class="ico"><use href="#perp"/></svg>垂点</button>
        <button class="tb on"><svg class="ico"><use href="#mid"/></svg>中点</button>
        <button class="tb"><svg class="ico"><use href="#vertex"/></svg>顶点</button>
        <button class="tb"><svg class="ico"><use href="#coord"/></svg>坐标</button>
      </div>
      <div class="toolbar off">
        <span class="grip"></span>
        <label class="pick short"><select aria-label="偏移方式"><option>不偏移</option></select></label>
        <span class="sep"></span>
        <label class="spin">X=<span><input type="text" value="0"><i></i></span>mm</label>
        <label class="spin">Y=<span><input type="text" value="0"><i></i></span>mm</label>
        <span class="sep"></span>
        <label class="rot"><input type="checkbox">旋转</label>
        <label class="spin big"><span><input type="text" value="0.000" aria-label="旋转角度"><i></i></span>°</label>
      </div>
    </div>

    <div class="editor">
      <div class="side-grip"><svg viewBox="0 0 10 10"><path d="M0 0h10v10H0z" fill="#e8b8b8" stroke="#444"/><path d="M2 2l6 6M8 2L2 8" stroke="#222" stroke-width="1.500"/></svg></div>
      <div class="editor-main">
        <div class="toolbar">
          <button class="tb step"><svg class="ico"><use href="#first-g"/></svg></button>
          <button class="tb step"><svg class="ico"><use href="#prev-g"/></svg></button>
          <button class="tb step"><svg class="ico"><use href="#next"/></svg></button>
          <button class="tb step"><svg class="ico"><use href="#last"/></svg></button>
          <span class="sep"></span>
          <button class="tb step"><svg class="ico"><use href="#up-g"/></svg></button>
          <button class="tb step"><svg class="ico"><use href="#down"/></svg></button>
          <span class="sep"></span>
          <button class="tb off"><svg class="ico"><use href="#ins-g"/></svg>插入</button>
          <button class="tb off"><svg class="ico"><use href="#delrow-g"/></svg>删除</button>
          <button class="tb"><svg class="ico"><use href="#scale-bar"/></svg>缩尺配筋</button>
          <button class="tb"><svg class="ico"><use href="#bar-info"/></svg>钢筋信息</button>
          <button class="tb"><svg class="ico"><use href="#bar-lib"/></svg>钢筋图库</button>
          <button class="tb"><svg class="ico"><use href="#other"/></svg>其他<i class="caret"></i></button>
          <button class="tb">关闭</button>
          <span class="sep"></span>
          <span class="total">单构件钢筋总重(kg)：429.239</span>
        </div>
        <div class="grid-box">
          <div class="grid-body">
            <div class="grid-clip">
              <table>
                <colgroup><col class="w-no"><col class="w-name"><col class="w-dia"><col class="w-lv"><col class="w-fig"><col class="w-shape"><col><col class="w-desc"><col class="w-bend"><col class="w-len"><col class="w-cnt"><col class="w-lap"><col class="w-loss"></colgroup>
                <thead><tr><th></th><th class="hot">筋号</th><th>直径(mm)</th><th>级别</th><th>图号</th><th>图形</th><th>计算公式</th><th>公式描述</th><th>弯曲调整(mm)</th><th>长度(mm)</th><th>根数</th><th>搭接</th><th>损耗</th></tr></thead>
                <tbody>
                  <tr class="sel"><th>1*</th><td class="name">CT-88-1.桩间连接筋1.1</td><td>25</td><td class="lv"><svg><use href="#hrb"/></svg></td><td>1</td><td><div class="bar">5240</div></td><td>5240</td><td>水平长度</td><td>(0)</td><td>5240</td><td>2</td><td>0</td><td>0</td></tr>
                  <tr><th>2</th><td class="name">CT-88-1.桩间连接筋1.2</td><td>25</td><td class="lv"><svg><use href="#hrb"/></svg></td><td>1</td><td><div class="bar">5356</div></td><td>5356</td><td>水平长度</td><td>(0)</td><td>5356</td><td>2</td><td>0</td><td>0</td></tr>
                  <tr><th>3</th><td class="name">CT-88-1.桩间连接筋1.3</td><td>25</td><td class="lv"><svg><use href="#hrb"/></svg></td><td>1</td><td><div class="bar">5471</div></td><td>5471</td><td>水平长度</td><td>(0)</td><td>5471</td><td>2</td><td>0</td><td>0</td></tr>
                  <tr><th>4</th><td class="name">CT-88-1.桩间连接筋2.1</td><td>25</td><td class="lv"><svg><use href="#hrb"/></svg></td><td>1</td><td><div class="bar">5240</div></td><td>5240</td><td>水平长度</td><td>(0)</td><td>5240</td><td>2</td><td>0</td><td>0</td></tr>
                  <tr><th>5</th><td class="name">CT-88-1.桩间连接筋2.2</td><td>25</td><td class="lv"><svg><use href="#hrb"/></svg></td><td>1</td><td><div class="bar">5356</div></td><td>5356</td><td>水平长度</td><td>(0)</td><td>5356</td><td>2</td><td>0</td><td>0</td></tr>
                </tbody>
              </table>
            </div>
            <div class="vscroll grid-v"><svg class="up"><use href="#chev"/></svg><i></i><svg><use href="#chev"/></svg></div>
          </div>
          <div class="hscroll grid-h"><svg class="left"><use href="#chev"/></svg><i></i><svg class="right"><use href="#chev"/></svg></div>
        </div>
      </div>
    </div>
  </section>
</main>

<div class="statusbar">
  <span>X=404116 Y=7556</span><span>层高:2.15m</span><span>底标高:-2.2m</span><span>1(1)</span><span></span><span>71.3 FPS</span>
</div>

<footer class="taskbar">
  <button class="start" aria-label="开始"><svg viewBox="0 0 16 16"><path d="M0 2l7-1v6.500H0zM8 1l8-1v7.500H8zM0 8.500h7V15l-7-1zM8 8.500h8V16l-8-1z" fill="#fff"/></svg></button>
  <label class="cortana">
    <svg viewBox="0 0 22 22"><circle cx="11" cy="11" r="9" fill="none" stroke="#111" stroke-width="3"/></svg>
    <input type="text" placeholder="在这里输入你要搜索的内容" aria-label="搜索">
    <svg viewBox="0 0 22 22"><rect x="8" y="3" width="6" height="11" rx="3" fill="none" stroke="#222" stroke-width="1.400"/><path d="M6 11q0 6 5 6t5-6M11 17v3M8 20h6" fill="none" stroke="#222" stroke-width="1.200"/></svg>
  </label>
  <button class="task"><svg viewBox="0 0 20 20"><path d="M2 3v2h11V3M2 17v-2h11v2M2 7h11v6H2zM17 3v14" fill="none" stroke="#fff" stroke-width="1.300"/><path d="M16 7h2v3h-2z" fill="#fff"/></svg></button>
  <button class="task spaced"><svg class="big" viewBox="0 0 20 20"><path d="M10 10Q1 11 1 5t5-4q5 1 4 9zM10 10Q9 1 15 1t4 5q-1 5-9 4zM10 10q9-1 9 5t-5 4q-5-1-4-9zM10 10q1 9-5 9t-4-5q1-5 9-4z" fill="#eee" stroke="#04161a" stroke-width=".8"/></svg></button>
  <label class="web-search">
    <svg viewBox="0 0 20 20"><path d="M17 13q-2 5-7 5-7-1-7-8 1-6 7-7 7 1 7 8H7q0 4 4 4l2-2zM7 8h6q0-3-3-3T7 8" fill="#2c9cf0" fill-rule="evenodd"/><path d="M1 17Q-1 8 18 2q-8 4-12 9-4 4-5 6" fill="#58b8f8"/></svg>
    <input type="text" placeholder="搜索网页和文件" aria-label="搜索网页和文件">
    <svg viewBox="0 0 20 20"><circle cx="9" cy="9" r="6.500" fill="none" stroke="#aaa" stroke-width="1.400"/><path d="M14 14l4 4" stroke="#aaa" stroke-width="1.400"/></svg>
  </label>
  <button class="task spaced"><svg class="huge" viewBox="0 0 26 26"><path d="M13 14h4q0 4-4 4-5 0-5-5 1-5 6-5M14 5q-10-1-11 8 1 9 10 9 8-1 8-9h-7M17 9q-5-1-6 4 0 3 3 3" fill="none" stroke="#ddd" stroke-width="1.300"/><path d="M20 0q3 1 3 5l2 4H15l2-4q0-4 3-5M18 10h4v2h-4z" fill="#f0b820"/></svg></button>
  <button class="task run"><svg class="big" viewBox="0 0 24 24"><rect width="24" height="24" rx="4" fill="#0a90f0"/><path d="M12 20V8q0-3 3-4M4 12h16M6 12q0 6 6 6t6-4" fill="none" stroke="#fff" stroke-width="2.200"/></svg></button>
  <button class="task run"><svg class="big" viewBox="0 0 24 24"><path d="M20 1Q8-1 3 7q-3 8 4 14 7 4 13-2 3-4 1-8h-9q4 3 2 6-4 3-6-1-3-8 5-11 4-1 7-4" fill="#1e9cf0"/></svg></button>
  <button class="task run"><svg class="big" viewBox="0 0 24 24"><rect width="24" height="24" rx="3" fill="#2474c8"/><path d="M3 8h8l1 1 1-1h8v11H3z" fill="#f4f4f4"/><path d="M5 16v-5M7 16v-3M9 16v-4" stroke="#48a" stroke-width="1.500"/><circle cx="15" cy="8" r="4.500" fill="#cfe8fc" stroke="#eee" stroke-width="1.500"/><path d="M18 12l4 5" stroke="#e0a030" stroke-width="2.500"/></svg></button>
  <button class="task run"><svg class="big" viewBox="0 0 24 24"><rect width="24" height="24" rx="4" fill="#c8681c"/><rect x="1" y="1" width="22" height="22" rx="3" fill="none" stroke="#e8c8a0"/><text x="12" y="16" class="pdf">PDF</text></svg></button>
  <button class="task run"><svg class="big" viewBox="0 0 24 24"><rect width="24" height="24" rx="3" fill="#f08c14"/><path d="M3 5l13-3 4 16-14 4z" fill="#fff8e0"/><path d="M6 8l8-2M7 11l7-2M8 14l4-1" stroke="#c8881c" stroke-width="1.300"/><path d="M9 17l9-11 3 2-9 11-4 1z" fill="#e03c20"/></svg></button>
  <div class="task-scroll"><svg class="up"><use href="#chev"/></svg><svg><use href="#chev"/></svg></div>
  <div class="tray">
    <svg class="people" viewBox="0 0 20 20"><circle cx="13" cy="5" r="3" fill="none" stroke="#fff" stroke-width="1.300"/><circle cx="7" cy="10" r="2.500" fill="none" stroke="#fff" stroke-width="1.300"/><path d="M3 18q0-5 4-5t4 5M11 9q6-2 6 4" fill="none" stroke="#fff" stroke-width="1.300"/></svg>
    <div class="two">32%<br>CPU使用</div>
    <svg viewBox="0 0 16 16"><path d="M2 11l6-6 6 6" fill="none" stroke="#fff" stroke-width="1.300"/></svg>
    <svg viewBox="0 0 16 16"><path d="M1 2v3h4V2M3 5v4h3M6 4h9v8H6z" fill="none" stroke="#fff"/><path d="M8 6h5v4H8z" fill="#fff"/><path d="M1 1v2M5 1v2" stroke="#fff"/></svg>
    <svg viewBox="0 0 16 16"><path d="M3 15Q3 4 15 3M7 15q0-8 8-8M11 15q0-4 4-4" fill="none" stroke="#bbb" stroke-width="1.300"/><circle cx="14" cy="14" r="1.500" fill="#fff"/></svg>
    <svg viewBox="0 0 16 16"><path d="M1 6h2l4-4v12l-4-4H1z" fill="none" stroke="#fff"/><path d="M9 6q2 2 0 4M11 4q4 4 0 8M13 2q5 6 0 12" fill="none" stroke="#fff"/></svg>
    <svg class="kbd" viewBox="0 0 24 14"><path d="M1 1h22v12H1z" fill="none" stroke="#fff" stroke-width="1.300"/><path d="M4 4h16M4 7h16M6 10h12" stroke="#fff" stroke-width="1.300" stroke-dasharray="1.500 1.500"/></svg>
    <span class="ime">中</span>
    <svg viewBox="0 0 16 16"><path d="M0 2l13-2 3 13-13 3z" fill="#f0481c"/><path d="M12 4q-6-1-6 1t4 3q2 4-6 3" fill="none" stroke="#fff" stroke-width="2"/></svg>
    <div class="two clock">20:02<br>2018/11/13</div>
    <svg viewBox="0 0 16 16"><path d="M1 1h14v11h-4l-3 3v-3H1z" fill="none" stroke="#fff" stroke-width="1.200"/></svg>
  </div>
</footer>

</body>
</html>
```
FILE: styles.css
```css
:root {
  --ui: "Open Sans", "Noto Sans CJK SC", sans-serif;
  --song: "Liberation Sans", "Noto Sans CJK SC", sans-serif;
  --face: #f0f0f0;
  --accent: #0078d7;
  --edge: #828790;
}

* {
  margin: 0;
  padding: 0;
  box-sizing: border-box;
}

body {
  height: 100vh;
  display: flex;
  flex-direction: column;
  overflow: hidden;
  background: var(--face);
  color: #000;
  font: 12px/16px var(--ui);
}

button, input, select {
  font: inherit;
  color: inherit;
  background: none;
  border: none;
}

h1, h2, h3 { font-size: 12px; font-weight: normal; }
ul { list-style: none; }
svg { flex: none; display: block; }
.sprite { position: absolute; width: 0; height: 0; }
.ico { width: 16px; height: 16px; }

/* title bar */
.titlebar {
  position: relative;
  height: 23px;
  flex: none;
  display: flex;
  align-items: center;
  gap: 5px;
  padding-left: 2px;
  background: #fff;
  color: #888;
  white-space: nowrap;
}

.titlebar h1 span { margin-left: 56px; }
.win-btns { margin-left: auto; display: flex; }
.win-btns button { width: 46px; display: flex; justify-content: center; }
.win-btns svg { width: 12px; height: 12px; }

.ball {
  position: absolute;
  left: 718px;
  top: -27px;
  width: 46px;
  height: 46px;
  padding-top: 24px;
  border-radius: 50%;
  border: 2px solid #d8f0dc;
  background: #3cc45c;
  box-shadow: 0 1px 3px #555;
  color: #fff;
  font-weight: bold;
  text-align: center;
  z-index: 2;
}

/* menu */
.menubar {
  height: 28px;
  flex: none;
  display: flex;
  align-items: center;
  padding: 0 0 2px 2px;
  white-space: nowrap;
}

.menubar > button { padding: 0 6px 0 5px; }
.account > button { padding: 0 4px; }
.menubar > button.tb { padding: 0 4px; }
.menubar > button.lead { padding-left: 13px; }
.menu-gap { width: 24px; height: 24px; margin-left: auto; background: #fafafa; }
.account { display: flex; align-items: center; height: 24px; margin-left: 3px; padding-right: 2px; background: #f8f8f8; }

/* toolbars */
.bar-row { height: 28px; flex: none; display: flex; }

.toolbar {
  display: flex;
  align-items: center;
  min-width: 0;
  height: 28px;
  padding-left: 1px;
  background: linear-gradient(#fdfdfd, #f2f2f2);
  white-space: nowrap;
}

.fit { padding-right: 4px; }

.tb {
  display: flex;
  align-items: center;
  gap: 3px;
  height: 23px;
  padding: 0 4px;
  flex: none;
}

.tb.on { background: #deebf6; outline: 1px solid var(--accent); outline-offset: -1px; }
.tb.flat { background: #fff; }
.tb.step { padding-left: 3px; }
.off { color: #7c7c7c; }

.sep { flex: none; width: 1px; height: 15px; margin: 0 1px 0 4px; background: #c0c0c0; }

.grip {
  flex: none;
  width: 2px;
  height: 15px;
  margin: 0 2px 0 4px;
  background: repeating-linear-gradient(#b4b4b4 0 2px, transparent 2px 4px);
}

.caret {
  border: 3px solid transparent;
  border-top-color: #000;
  border-bottom: 0;
}

.off .caret { border-top-color: #888; }
.caret.wide { margin: 0 1px 0 3px; }
.more { align-self: flex-start; margin-left: auto; padding-right: 8px; font-weight: bold; }

.row-main {
  display: grid;
  grid-template-columns: 152fr 551fr 663fr;
  height: 29px;
  padding-bottom: 1px;
}

.row-combo { display: grid; grid-template-columns: 607fr 426fr; height: 29px; }
.row-draw { display: grid; grid-template-columns: 1000fr 33fr; }
.row-draw .sep { margin-right: 0; }
.row-combo .toolbar, .row-draw .toolbar { margin-right: 1px; }
.row-combo .more, .row-draw .more { padding-right: 4px; }

.pick { position: relative; flex: none; width: 72px; height: 23px; background: #fff; border-right: 2px solid #f4f4f4; color: #000; }
.pick.short { width: 60px; }

.pick select {
  appearance: none;
  width: 100%;
  height: 100%;
  padding-left: 2px;
}

.pick::after {
  content: "";
  position: absolute;
  right: 3px;
  top: 10px;
  border: 3px solid transparent;
  border-top-color: #000;
  border-bottom: 0;
  pointer-events: none;
}

.pick.boxed { width: 56px; background: #f6f6f6; border: 1px solid #707070; margin-right: 1px; }
.pick.boxed::after { border-top-color: #777; }

/* work area */
.work {
  flex: 1;
  min-height: 0;
  display: grid;
  grid-template-columns: 161px 165px 1fr;
  column-gap: 4px;
}

.work > .stage { margin-left: -1px; }

.dock {
  display: flex;
  flex-direction: column;
  gap: 1px;
  min-height: 0;
  padding-bottom: 2px;
  font-family: var(--song);
}

.dock-title { display: flex; align-items: center; height: 17px; padding-right: 4px; border: 1px solid #888; }
.dock-title h2 { flex: 1; line-height: 15px; }
.dock-title svg { width: 9px; height: 9px; margin-left: 9px; }

.nav-btn { height: 21px; flex: none; border: 1px solid #999; background: #f2f2f2; }
.strip { height: 26px; flex: none; display: flex; align-items: center; gap: 7px; padding-left: 7px; border: 1px solid #aaa; background: #f8f8f8; }

.tree-box {
  flex: 1;
  min-height: 0;
  display: flex;
  flex-direction: column;
  margin-left: 2px;
  padding: 1px;
  border: 1px solid var(--edge);
  background: #fff;
}

.list-dock { padding-bottom: 1px; }
.list-dock .tree-box { margin-left: 0; }
.tree-body { flex: 1; min-height: 0; display: flex; }
.tree { flex: 1; min-width: 0; overflow: hidden; white-space: nowrap; }
.tree svg + span { padding-left: 4px; }
.node { display: flex; align-items: center; height: 16px; }
.chev { width: 10px; height: 10px; }

.nav-tree .node { padding-left: 5px; }
.nav-tree .node .ico { margin: 0 4px 0 7px; }
.nav-tree ul { margin-left: 10px; padding-left: 18px; border-left: 1px dotted #888; }
.comp-tree .node { padding-left: 25px; }
.comp-tree .node .gear { margin-left: 9px; }
.comp-tree .node span { padding-left: 6px; }
.comp-tree ul { margin-left: 30px; padding-left: 18px; border-left: 1px dotted #888; }
.comp-tree ul span { padding-left: 8px; }
.gear { width: 12px; height: 12px; }

.tree ul li { display: flex; align-items: center; height: 16px; }

.tree ul li::before {
  content: "";
  align-self: flex-start;
  flex: none;
  width: 12px;
  height: 16px;
  margin-top: -8px;
  border-left: 1px dotted #888;
  border-bottom: 1px dotted #888;
}

.tree .current span, .tree .current svg { background: #d9d9d9; }
.tree .current span { padding-right: 5px; }
.picked .node b { display: flex; align-items: center; margin-left: 5px; padding-right: 2px; background: #316ac5; font-weight: normal; }
.comp-tree .picked b .gear { margin-left: 4px; }

.vscroll, .hscroll { flex: none; display: flex; align-items: center; background: var(--face); }
.vscroll { flex-direction: column; width: 17px; }
.hscroll { height: 17px; }
.vscroll svg, .hscroll svg { width: 10px; height: 10px; margin: 4px; }
.vscroll i { width: 15px; background: #cdcdcd; }
.hscroll i { height: 15px; background: #cdcdcd; }
.up { transform: rotate(180deg); }
.left { transform: rotate(90deg); }
.right { transform: rotate(-90deg); }
.vscroll svg:last-child { margin-top: auto; }
.hscroll svg:last-child { margin-left: auto; }

.nav-v i { height: 49%; margin-top: 150px; }
.nav-h i { width: 64%; }
.comp-v i { height: 18%; margin-top: 407px; }
.comp-h i { width: 72%; }
.nav-h { margin-right: 16px; }
.comp-h { margin-right: 17px; }
.grid-v i { height: 20px; margin-top: -3px; }
.grid-h i { width: 48%; }

.list-bar { flex: none; height: 25px; font-family: var(--ui); }
.search { flex: none; display: flex; height: 25px; }
.search input { flex: 1; min-width: 0; margin-left: 2px; padding-left: 2px; border: 1px solid #707070; background: #fff; }
.search button { width: 25px; display: flex; align-items: center; justify-content: center; }
::placeholder { color: #777; opacity: 1; }

/* right side */
.stage { min-width: 0; min-height: 0; display: flex; flex-direction: column; }
.viewport { position: relative; flex: 1; min-height: 0; background: #000; }
.scene { width: 100%; height: 100%; }
.axis-no { fill: #ddd; font: 15px "Liberation Sans", sans-serif; text-anchor: middle; }

.float-panel {
  position: absolute;
  left: 10px;
  top: 3px;
  width: 166px;
  height: 177px;
  display: flex;
  flex-direction: column;
  background: #fff;
  border: 1px solid #444;
}

.float-panel h3 { padding: 6px 7px 8px; color: #999; }
.checks { flex: 1; margin: 0 1px 1px 0; padding: 2px 3px; border: 1px solid var(--edge); font-family: var(--song); }
.checks label { display: flex; align-items: center; gap: 3px; height: 12px; }

input[type="checkbox"] {
  appearance: none;
  display: flex;
  justify-content: center;
  width: 11px;
  height: 11px;
  border: 1px solid #777;
  background: #fff;
}

input[type="checkbox"]:checked::after {
  content: "";
  width: 3px;
  height: 6px;
  border: solid #333;
  border-width: 0 1px 1px 0;
  transform: rotate(40deg);
}

.row-snap { height: 32px; padding-bottom: 2px; }
.row-snap .toolbar { height: 29px; padding-right: 1px; }
.row-snap .sep { margin-right: 0; }
.spin { display: flex; align-items: center; padding-left: 3px; font-size: 13px; }
.spin span { display: flex; width: 58px; height: 23px; margin: 0 2px; border: 1px solid #707070; background: #f4f4f4; }
.spin.big span { width: 68px; }
.spin input { flex: 1; min-width: 0; text-align: right; font-size: 12px; }

.spin i {
  width: 19px;
  background:
    conic-gradient(from 135deg at 50% 0, #777 90deg, transparent 0) center 4px / 6px 3px no-repeat,
    conic-gradient(from -45deg at 50% 100%, #777 90deg, transparent 0) center 15px / 6px 3px no-repeat;
}

.rot { display: flex; align-items: center; gap: 8px; padding: 0 0 0 3px; color: #000; }

/* rebar editor */
.editor { flex: none; height: 201px; display: flex; }
.side-grip { width: 13px; padding: 1px 2px; background: radial-gradient(circle, #bbb 1px, transparent 1px) 2px 0 / 5px 5px; }
.side-grip svg { width: 9px; height: 10px; }
.editor-main { flex: 1; min-width: 0; display: flex; flex-direction: column; }
.editor-main .toolbar { padding-left: 0; }
.total { padding-left: 5px; }

.grid-box { flex: 1; min-height: 0; display: flex; flex-direction: column; margin: 0 1px 3px 0; border: 1px solid #999; background: #fff; }
.grid-body { flex: 1; min-height: 0; display: flex; }
.grid-clip { flex: 1; min-width: 0; overflow: hidden; }

table { width: 100%; table-layout: fixed; border-collapse: separate; border-spacing: 0; font-family: var(--song); line-height: 12px; }
th { font-weight: normal; }
th, td { border-right: 1px solid #b8b8b8; border-bottom: 1px solid #b8b8b8; white-space: nowrap; overflow: hidden; }
thead th { height: 19px; background: linear-gradient(#fff, #eee); }
thead th.hot { background: linear-gradient(#f8d290, #f4bc58); color: #5c0a5c; }
tbody th { background: linear-gradient(#fff, #f0f0f0); }
td { height: 29px; padding: 0 2px; background: #ccffda; }
.sel th { background: #ffd28a; color: #5c0a5c; }
.name { white-space: normal; border-right-color: #000; }
.sel .name { background: #aeeadb; }
.lv svg { width: 12px; height: 12px; margin: 0 auto; }
.bar { width: 150px; height: 15px; margin: 0 auto; border-bottom: 2px solid #000; color: #f00; text-align: center; }

.w-no { width: 33px; }
.w-name { width: 73px; }
.w-dia { width: 56px; }
.w-lv { width: 36px; }
.w-fig { width: 33px; }
.w-shape { width: 201px; }
.w-desc { width: 156px; }
.w-bend { width: 81px; }
.w-len { width: 61px; }
.w-cnt { width: 38px; }
.w-lap { width: 39px; }
.w-loss { width: 27px; }

/* status bar */
.statusbar {
  flex: none;
  display: grid;
  grid-template-columns: 148px 77px 98px 46px 1fr 70px;
  gap: 3px;
  height: 21px;
  padding-bottom: 1px;
  font-family: var(--song);
}

.statusbar span { padding-left: 2px; line-height: 18px; border: 1px solid #d4d4d4; background: #f8f8f8; }

/* taskbar */
.taskbar { flex: none; height: 40px; display: flex; align-items: center; background: #04161a; color: #fff; overflow: hidden; }
.start { width: 48px; height: 40px; display: flex; align-items: center; justify-content: center; background: #0a0a0a; }
.start svg { width: 17px; height: 17px; }
.cortana { width: 344px; height: 40px; display: flex; align-items: center; gap: 9px; padding: 0 9px; background: #f2f2f2; color: #222; font-size: 14px; }
.cortana svg { width: 22px; height: 22px; }
.cortana input { flex: 1; min-width: 0; }
.cortana ::placeholder { color: #222; }

.task { position: relative; flex: none; width: 42px; height: 40px; display: flex; align-items: center; justify-content: center; }
.task.spaced { width: 52px; }
.cortana + .task { width: 48px; }
.task svg { width: 20px; height: 20px; }
.task svg.big { width: 24px; height: 24px; }
.task svg.huge { width: 30px; height: 30px; }
.task.run::after { content: ""; position: absolute; left: 5px; right: 4px; bottom: 0; height: 3px; background: #76b9ed; }
.pdf { fill: #fff; font: bold 8px "Liberation Sans", sans-serif; text-anchor: middle; }

.web-search { width: 150px; height: 30px; display: flex; align-items: center; gap: 4px; padding: 0 5px 0 2px; border: 1px solid #888; background: #444; color: #bbb; }
.web-search svg { width: 20px; height: 20px; }
.web-search input { flex: 1; min-width: 0; }
.web-search ::placeholder { color: #bbb; }

.task-scroll { width: 17px; height: 40px; display: flex; flex-direction: column; justify-content: space-between; align-items: center; margin-left: 3px; padding: 3px 0; background: var(--face); }
.task-scroll svg { width: 10px; height: 10px; }

.tray { flex: 1; display: flex; align-items: center; justify-content: space-between; padding: 0 25px 0 20px; }
.tray svg { width: 16px; height: 16px; }
.tray .people { width: 20px; height: 20px; margin-right: 22px; }
.tray svg.kbd { width: 24px; height: 14px; }
.two { text-align: center; line-height: 17px; }
.tray > .two:first-of-type { margin-right: 12px; }
.clock { margin-right: 8px; }
```
